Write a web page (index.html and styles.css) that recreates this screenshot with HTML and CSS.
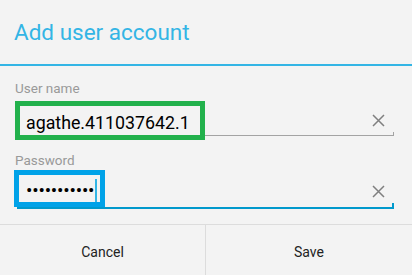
FILE: index.html
```html
<!DOCTYPE html>
<html lang="en">
<head>
<meta charset="utf-8">
<title>Add user account</title>
<link rel="stylesheet" href="styles.css">
</head>
<body>
<div class="dialog">
  <header class="title-bar"><h1 class="title">Add user account</h1></header>
  <div class="form">
    <label class="label label-user">User name</label>
    <div class="field field-user">
      <span class="value value-user">agathe.411037642.1</span>
      <svg class="clear" width="13" height="13" viewBox="0 0 13 13"><path d="M1 1L12 12M12 1L1 12"/></svg>
    </div>
    <label class="label label-pass">Password</label>
    <div class="field field-pass">
      <span class="value value-pass"><span class="dots">•••••••••••</span><span class="cursor"></span></span>
      <svg class="clear clear-pass" width="13" height="13" viewBox="0 0 13 13"><path d="M1 1L12 12M12 1L1 12"/></svg>
    </div>
  </div>
  <div class="buttons">
    <button class="btn">Cancel</button>
    <button class="btn btn-save">Save</button>
  </div>
</div>
</body>
</html>
```
FILE: styles.css
```css
html, body {
  margin: 0;
  padding: 0;
  background: #f3f3f3;
  font-family: Roboto, "Liberation Sans", sans-serif;
  overflow: hidden;
}
.dialog {
  width: 412px;
}
.title-bar {
  height: 64px;
  border-bottom: 2px solid #33b5e5;
  padding-left: 14px;
}
.title {
  margin: 0;
  font-weight: 400;
  font-size: 22.5px;
  line-height: 64px;
  color: #33b5e5;
}
.form {
  padding: 0 18px 0 15px;
}
.label {
  display: block;
  font-size: 13.5px;
  line-height: 16px;
  color: #999;
  margin-top: 14px;
}
.label-pass {
  margin-top: 12px;
}
.field {
  position: relative;
  display: flex;
  align-items: center;
}
.field-user {
  margin-top: 5px;
  height: 39px;
}
.field-user::after {
  content: "";
  position: absolute;
  left: 0;
  right: 0;
  bottom: 4px;
  height: 3px;
  border-bottom: 1px solid #a3a3a3;
  border-right: 1px solid #a3a3a3;
}
.field-pass {
  margin-top: 2px;
  margin-left: -1px;
  height: 37px;
}
.field-pass::after {
  content: "";
  position: absolute;
  left: 3px;
  right: 0;
  bottom: -2px;
  height: 4px;
  border-bottom: 2px solid #0099cc;
  border-right: 2px solid #0099cc;
}
.value {
  position: relative;
  z-index: 1;
  box-sizing: border-box;
}
.value-user {
  width: 190px;
  height: 39px;
  border: 5px solid #22b14c;
  padding: 4px 0 0 6px;
  font-size: 17.8px;
  line-height: 25px;
  color: #000;
  white-space: nowrap;
}
.value-pass {
  display: flex;
  width: 91px;
  height: 37px;
  border: 5px solid #00a2e8;
  padding-left: 7px;
}
.dots {
  align-self: center;
  font-size: 19px;
  line-height: 20px;
  margin-top: 4px;
  color: #000;
  letter-spacing: -0.2px;
}
.cursor {
  width: 2px;
  margin: 4px 0 0 1px;
  background: #33b5e5;
}
.clear {
  margin-left: auto;
  margin-right: 9px;
  flex: none;
}
.clear path {
  stroke: #7f7f7f;
  stroke-width: 1.5;
  fill: none;
}
.clear-pass {
  margin-top: 6px;
}
.buttons {
  margin-top: 17px;
  border-top: 1px solid #dcdcdc;
  display: grid;
  grid-template-columns: 205px 1fr;
}
.btn {
  margin: 0;
  padding: 0;
  border: 0;
  background: transparent;
  font-family: Roboto, "Liberation Sans", sans-serif;
  font-size: 14px;
  line-height: 54px;
  height: 54px;
  color: #222;
}
.btn-save {
  border-left: 1px solid #dcdcdc;
}
```
